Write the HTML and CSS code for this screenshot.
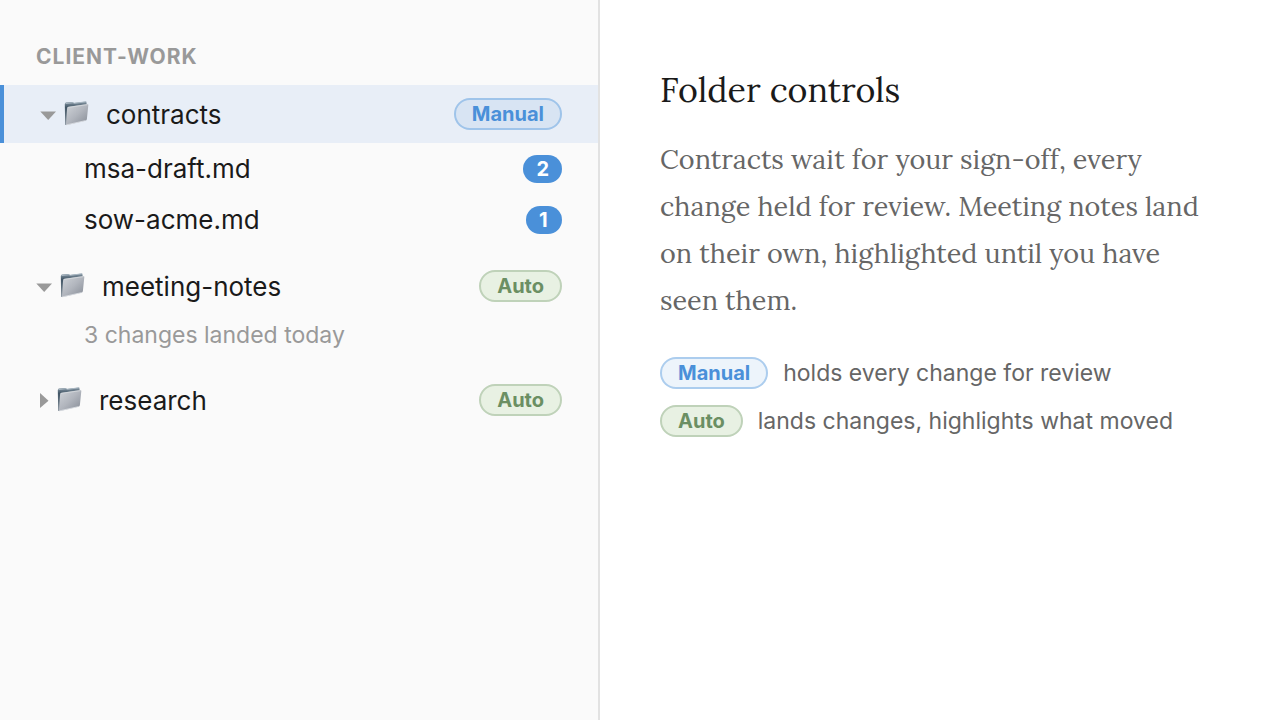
FILE: index.html
```html
<!DOCTYPE html>
<html lang="en">
<head>
<meta charset="utf-8">
<title>Folder controls</title>
<link rel="stylesheet" href="styles.css">
</head>
<body>
<svg class="defs" width="0" height="0" aria-hidden="true">
  <defs>
    <linearGradient id="front" x1="0" y1="0" x2="1" y2="1">
      <stop offset="0" stop-color="#d0d4d9"/>
      <stop offset="0.5" stop-color="#b1b5bd"/>
      <stop offset="1" stop-color="#858b95"/>
    </linearGradient>
    <linearGradient id="back" x1="0" y1="0" x2="0" y2="1">
      <stop offset="0" stop-color="#8b9ba8"/>
      <stop offset="0.25" stop-color="#425666"/>
      <stop offset="1" stop-color="#7d8994"/>
    </linearGradient>
    <symbol id="folder" viewBox="0 0 24 25">
      <path d="M0.3 3 L1.2 1.6 L8 0.9 L9.2 2 L21.8 0.4 L22.3 4 L3 23.6 L0.7 24 Z" fill="url(#back)"/>
      <path d="M1 2.6 L8.6 1.7 L9.6 2.4 L21.4 0.8" fill="none" stroke="#a9b7c2" stroke-width="1"/>
      <path d="M2.6 7.2 Q2.7 6 4 5.8 L22.6 3 Q24 2.9 23.8 4.2 L22.4 18 Q22.2 19.4 20.8 19.8 L2.6 23.9 Q1.4 24.2 1.5 22.8 Z" fill="url(#front)"/>
      <path d="M3.2 6.5 L23.3 3.6" fill="none" stroke="#d5d9dd" stroke-width="0.8"/>
      <path d="M1.7 23.9 L21 19.6" fill="none" stroke="#dce0e4" stroke-width="0.8"/>
    </symbol>
  </defs>
</svg>
<div class="app">
  <nav class="sidebar" aria-label="Files">
    <h2 class="project">CLIENT-WORK</h2>
    <div class="folder selected">
      <svg class="arrow" viewBox="0 0 16 16" aria-hidden="true"><path d="M0.3 5.5 H16 L8.2 14 Z"/></svg>
      <svg class="icon" aria-hidden="true"><use href="#folder"/></svg>
      <span class="name">contracts</span>
      <span class="pill manual">Manual</span>
    </div>
    <div class="file"><span class="name">msa-draft.md</span><span class="count">2</span></div>
    <div class="file"><span class="name">sow-acme.md</span><span class="count">1</span></div>
    <div class="folder spaced">
      <svg class="arrow" viewBox="0 0 16 16" aria-hidden="true"><path d="M0.3 5.5 H16 L8.2 14 Z"/></svg>
      <svg class="icon" aria-hidden="true"><use href="#folder"/></svg>
      <span class="name">meeting-notes</span>
      <span class="pill auto">Auto</span>
    </div>
    <p class="note">3 changes landed today</p>
    <div class="folder spaced">
      <svg class="arrow closed" viewBox="0 0 13 16" aria-hidden="true"><path d="M4 1 V16 L12.5 8.7 Z"/></svg>
      <svg class="icon" aria-hidden="true"><use href="#folder"/></svg>
      <span class="name">research</span>
      <span class="pill auto">Auto</span>
    </div>
  </nav>
  <main class="content">
    <h1 class="title">Folder controls</h1>
    <p class="text">Contracts wait for your sign-off, every change held for review. Meeting notes land on their own, highlighted until you have seen them.</p>
    <ul class="legend">
      <li class="entry"><span class="pill manual">Manual</span>holds every change for review</li>
      <li class="entry"><span class="pill auto">Auto</span>lands changes, highlights what moved</li>
    </ul>
  </main>
</div>
</body>
</html>
```
FILE: styles.css
```css
* { box-sizing: border-box; }
body {
  margin: 0;
  font-family: Inter, "Liberation Sans", sans-serif;
  color: #1a1a1a;
  background: #fff;
}
.defs { position: absolute; }
.app {
  display: grid;
  grid-template-columns: 15fr 17fr;
  min-height: 100vh;
}
.sidebar {
  background: #fafafa;
  border-right: 2px solid #e2e2e2;
  padding-top: 43px;
}
.project {
  margin: 0 36px 14px;
  font-size: 21px;
  line-height: 28px;
  font-weight: 700;
  letter-spacing: 1px;
  color: #999;
}
.folder, .file {
  display: flex;
  align-items: center;
  padding: 0 36px;
  font-size: 26px;
}
.folder { height: 58px; }
.file { height: 51px; padding-left: 84px; }
.selected {
  background: #e8eef7;
  border-left: 4px solid #4a90d9;
}
.spaced { margin-top: 12px; }
.arrow {
  width: 16px;
  height: 16px;
  margin-right: 8px;
  fill: #999;
}
.closed { width: 13px; }
.icon {
  width: 25px;
  height: 25px;
  margin-right: 17px;
  margin-bottom: 2px;
}
.name { flex: 1; }
.pill {
  height: 32px;
  padding: 0 16px;
  border: 2px solid;
  border-radius: 16px;
  font-size: 20px;
  line-height: 28px;
  font-weight: 700;
}
.manual {
  color: #4a90d9;
  background: rgba(74, 144, 217, 0.1);
  border-color: rgba(74, 144, 217, 0.4);
}
.auto {
  color: #6b8f63;
  background: #e8f1e3;
  border-color: #bfd2b9;
}
.count {
  min-width: 36px;
  padding: 0 13px;
  border-radius: 14px;
  background: #4a90d9;
  color: #fff;
  font-size: 20px;
  line-height: 28px;
  font-weight: 700;
}
.note {
  margin: 0;
  padding: 0 36px 4px 84px;
  font-size: 23px;
  line-height: 40px;
  color: #999;
}
.content { padding: 68px 60px; }
.title {
  margin: 0 0 24px;
  font: 400 34px/44px Lora, "Liberation Serif", serif;
}
.text {
  margin: 0 0 33px;
  font: 400 27px/47px Lora, "Liberation Serif", serif;
  color: #666;
}
.legend {
  display: grid;
  gap: 16px;
  margin: 0;
  padding: 0;
  list-style: none;
}
.entry {
  display: flex;
  align-items: center;
  gap: 15px;
  font-size: 23px;
  line-height: 32px;
  color: #666;
}
```
